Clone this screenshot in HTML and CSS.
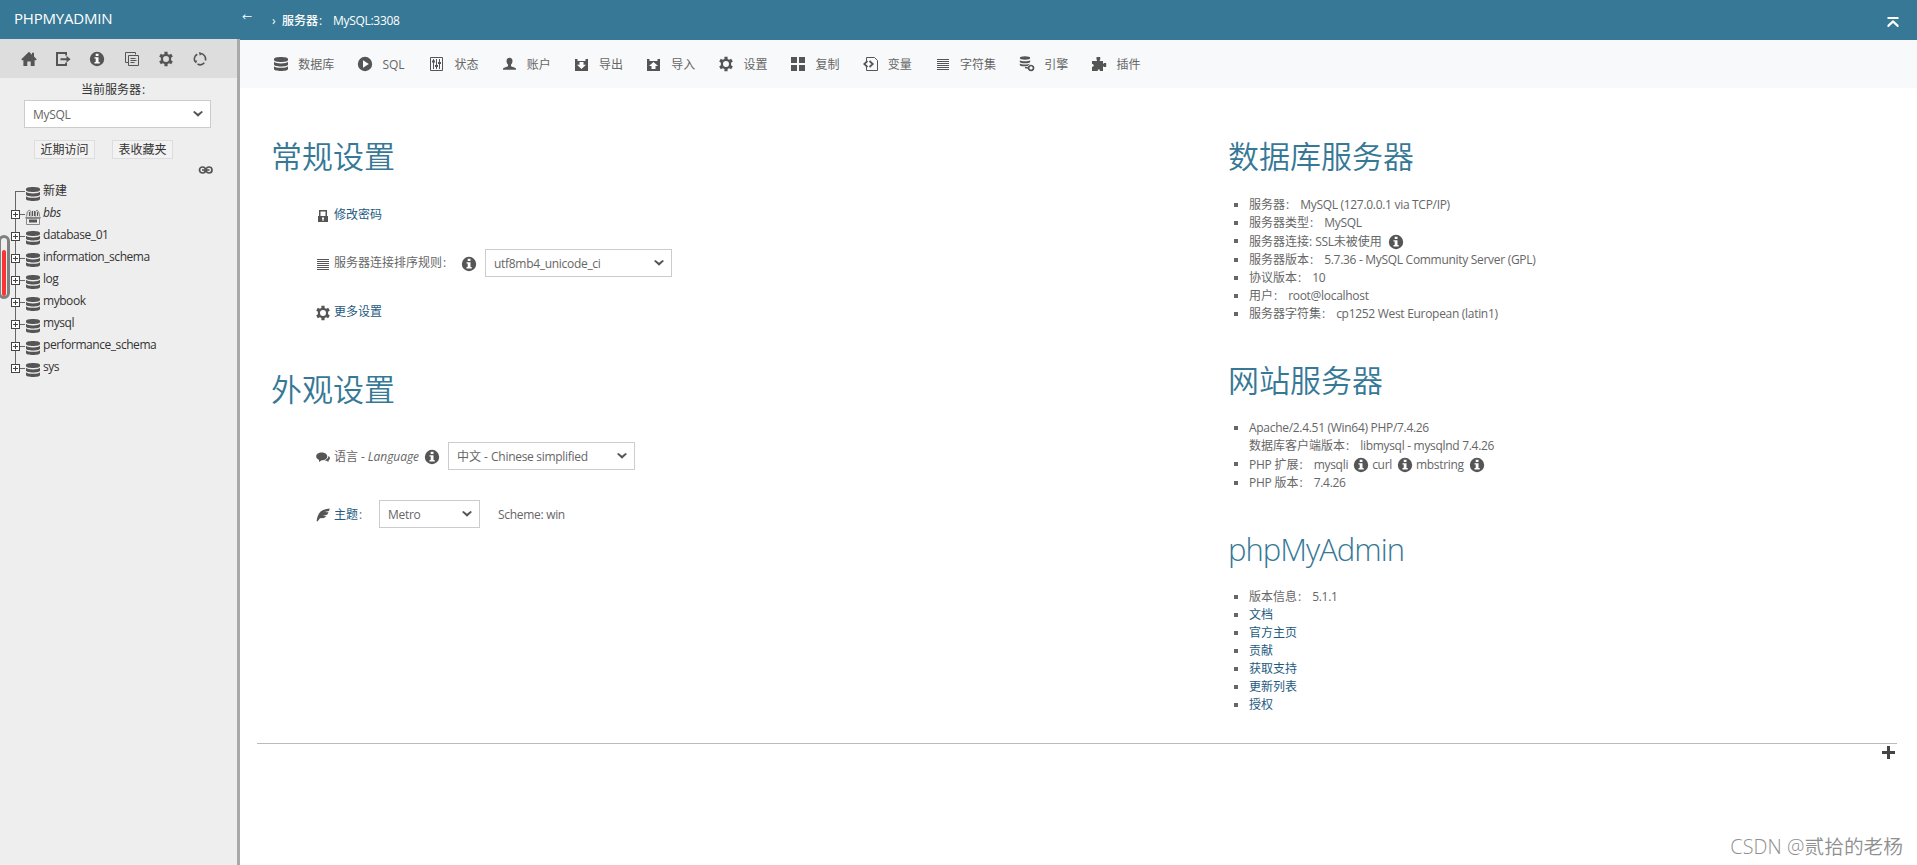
FILE: index.html
```
<!DOCTYPE html>
<html lang="zh-CN">
<head>
    <meta charset="UTF-8">
    <meta name="viewport" content="width=device-width, initial-scale=1.0">
    <title>MySQL:3308 | phpMyAdmin 5.1.1</title>
    <link rel="stylesheet" href="styles.css">
</head>
<body>
    <!-- Icon sprite -->
    <svg class="sprite" xmlns="http://www.w3.org/2000/svg">
        <symbol id="i-db" viewBox="0 0 16 16">
            <path d="M1 3c0-1.300 3-2 7-2s7 .7 7 2v1c0 1.300-3 2-7 2s-7-.7-7-2z"/>
            <path d="M1 5.800c1 1 3.500 1.600 7 1.600s6-.6 7-1.600v2.700c0 1.200-3 2-7 2s-7-.8-7-2z"/>
            <path d="M1 10.200c1 1 3.500 1.600 7 1.600s6-.6 7-1.600v2.700c0 1.200-3 2-7 2s-7-.8-7-2z"/>
        </symbol>
        <symbol id="i-home" viewBox="0 0 16 16">
            <path d="M8 .8 11 3.700V1.800h2v3.800l2.700 2.700-.7.900h-1.400V15H9.700v-4.500H6.300V15H2.400V9.200H1L.3 8.300z"/>
        </symbol>
        <symbol id="i-exit" viewBox="0 0 16 16">
            <path d="M1 1h11v3.500h-1.800V3H3v10h7.200v-1.500H12V15H1z"/>
            <path d="M5.500 7.200h6V4.800L15.600 8.200l-4.100 3.400V9.200h-6z"/>
        </symbol>
        <symbol id="i-info" viewBox="0 0 16 16">
            <circle cx="8" cy="8" r="7.200"/>
            <path class="cut" d="M6.700 2.800h2.800v2.200H6.700zM5.500 6.200h4v4.800h1.200v1.400H5.500V11h1.200V7.600H5.500z"/>
        </symbol>
        <symbol id="i-docs" viewBox="0 0 16 16">
            <path class="line" d="M4.500 11.500h-3v-10h10v2M4.500 4.500h10v10h-10zM6.500 7.500h5M6.500 9.500h6M6.500 11.500h4"/>
        </symbol>
        <symbol id="i-gear" viewBox="0 0 16 16">
            <path fill-rule="evenodd" d="M6.400.8h3.200v2.100l1.600.9 2-1 1.600 2.700-1.700 1.200v2.600l1.700 1.200-1.600 2.700-2-1-1.600.9v2.100H6.400v-2.100l-1.600-.9-2 1-1.600-2.700 1.700-1.200V6.700L1.200 5.500l1.600-2.700 2 1 1.600-.9zM8 5a3 3 0 1 0 0 6 3 3 0 0 0 0-6z"/>
        </symbol>
        <symbol id="i-reload" viewBox="0 0 16 16">
            <path class="line thick" d="M5.200 3.200A5.600 5.600 0 0 0 3 10.500M5.500 13a5.600 5.600 0 0 0 6.800-1.300M13.400 9.500A5.600 5.600 0 0 0 8.500 2.500"/>
            <path d="M1.800 9.800 5.300 9.500 4 12.600zM6.800 1l3.500 1.200-2.500 2.600z"/>
        </symbol>
        <symbol id="i-play" viewBox="0 0 16 16">
            <circle cx="8" cy="8" r="7.200"/>
            <path class="cut" d="M6 4.300 11.800 8 6 11.700z"/>
        </symbol>
        <symbol id="i-status" viewBox="0 0 16 16">
            <path class="line" d="M1.500 1.500h12v13h-12zM4.500 3v10M7.500 3v10M10.500 3v10"/>
            <path d="M3 4.500h3v2H3zM6 9h3v2H6zM9 6h3v2H9z"/>
        </symbol>
        <symbol id="i-user" viewBox="0 0 16 16">
            <path d="M7.500 1.800c2 0 3 1.300 3 3.200 0 1.600-.7 2.800-1.500 3.600v1.600l4.500 1.800c.5.300.5 1 .5 1.700H1c0-.7 0-1.400.5-1.700L6 10.200V8.600C5.200 7.800 4.500 6.600 4.500 5c0-1.900 1-3.200 3-3.200z"/>
        </symbol>
        <symbol id="i-export" viewBox="0 0 16 16">
            <path d="M1 3h2.500v2h8V3H14v12H1z"/>
            <path class="cut" d="M5.500 6h4v2.700H12L7.500 13 3 8.700h2.500z"/>
        </symbol>
        <symbol id="i-import" viewBox="0 0 16 16">
            <path d="M1 3h2.500v2h8V3H14v12H1z"/>
            <path class="cut" d="M5.500 13h4v-3H12L7.500 6 3 10h2.500z"/>
        </symbol>
        <symbol id="i-blocks" viewBox="0 0 16 16">
            <path d="M1 1h6v6H1zM9 1h6v6H9zM1 9h6v6H1zM9 9h6v6H9z"/>
        </symbol>
        <symbol id="i-vars" viewBox="0 0 16 16">
            <path class="line" d="M3.500 5V1.500h8l3 3v10h-11V11"/>
            <path class="line thick" d="M4.500 5 1.200 8l3.300 3M6.500 5l3.300 3-3.300 3"/>
        </symbol>
        <symbol id="i-lines" viewBox="0 0 16 16">
            <path d="M2 3h12v1H2zM2 5h12v1H2zM2 7h12v1H2zM2 9h12v1H2zM2 11h12v1H2zM2 13h12v1H2z"/>
        </symbol>
        <symbol id="i-engine" viewBox="0 0 16 16">
            <ellipse cx="6" cy="2" rx="5.200" ry="1.700"/>
            <path d="M.8 4.200c1.500 1.300 8.900 1.300 10.400 0v1.500c0 2-10.400 2-10.400 0zM.8 7.500c1.500 1.300 8.900 1.300 10.400 0l-2.500 2.400C5 10.700.8 10.300.8 9z"/>
            <path class="line thick" d="M12 9.500a2.500 2.500 0 1 0 .1 0zM6 11.500l3 .5"/>
        </symbol>
        <symbol id="i-plugin" viewBox="0 0 16 16">
            <path d="M5.500 1h3.700v2.500L8.500 5H12v3l1.200-1h2v4h-2l-1.200-.8V15H8.800v-1.500h-2V15H1v-4l2-1-1-2H1V5h5.200l-.7-1.500z"/>
        </symbol>
        <symbol id="i-lock" viewBox="0 0 16 16">
            <path fill-rule="evenodd" d="M4 2h8v6h1v6H3V8h1zm1.500 1.500V8h5V3.500zM7 9.500V11l.5.500V13h1v-1.500L9 11V9.500z"/>
        </symbol>
        <symbol id="i-chat" viewBox="0 0 16 16">
            <path d="M6.700 3.500c3.200 0 5.500 1.700 5.500 3.900s-2.300 3.800-5.500 3.800L4 13v-2.300C2.300 10 1.200 8.900 1.200 7.400c0-2.200 2.300-3.900 5.500-3.900z"/>
            <path d="M13.500 7c.9.500 1.400 1.300 1.400 2.300 0 1-.6 1.700-1.400 2.100V13l-2-1.200c-1 0-1.600-.2-2.200-.5 2.400-.7 4-2.200 4.200-4.300z"/>
        </symbol>
        <symbol id="i-feather" viewBox="0 0 16 16">
            <path d="M14.800 1.500 14 4l-4.500.9 4 .3-1.300 2.500-4.500.9 3.700.4-2.400 2-4 .2-2.500 3.400-.9-.5c.6-3.700 1.200-6.900 4-9.700C8 2.700 11.500 1.700 14.800 1.500z"/>
        </symbol>
        <symbol id="i-chevron" viewBox="0 0 12 8">
            <path d="M1 2 2.500.9 6 3.800 9.500.9 11 2 6 6.700z"/>
        </symbol>
        <symbol id="i-link" viewBox="0 0 16 10">
            <rect class="line thick" x="1.500" y="2" width="6" height="6" rx="3"/>
            <rect class="line thick" x="8" y="2" width="6" height="6" rx="3"/>
            <path d="M4 4.200h7.500v1.600H4z"/>
        </symbol>
        <symbol id="i-basket" viewBox="0 0 16 18">
            <path class="pale" d="M1 9V5l2-3h2.500l1 2 1-2h2l1 2 .8-2H13l2 3v4z"/>
            <path class="line soft" d="M1.500 8.500 2.300 4l2-2L6 3.500v5M10.500 8.500v-5L12 2l1.800 2 .9 4.500"/>
            <path class="line" d="M4.500 4v4M7.500 3v5M9.500 3v5M12.500 4v4"/>
            <path class="soft-fill" d="M0 9h16l-1 2H1z"/>
            <path class="line soft" d="M1.500 10.500h13v6h-13z"/>
            <path d="M4 11.500h8v3H4z"/>
        </symbol>
        <symbol id="i-totop" viewBox="0 0 12 12">
            <path d="M.5 1h11v2H.5zM6 4l5.500 5v2h-1.200L6 7l-4.300 4H.5V9z"/>
        </symbol>
    </svg>

    <aside class="sidebar">
        <div class="brand">PHPMYADMIN</div>
        <div class="nav-icons">
            <svg class="icon"><use href="#i-home"/></svg>
            <svg class="icon"><use href="#i-exit"/></svg>
            <svg class="icon"><use href="#i-info"/></svg>
            <svg class="icon"><use href="#i-docs"/></svg>
            <svg class="icon"><use href="#i-gear"/></svg>
            <svg class="icon"><use href="#i-reload"/></svg>
        </div>
        <div class="server-choice">
            <label>当前服务器<span class="colon">:</span></label>
            <div class="select"><span class="en">MySQL</span><svg class="chevron"><use href="#i-chevron"/></svg></div>
        </div>
        <div class="quick">
            <button type="button">近期访问</button>
            <button type="button">表收藏夹</button>
        </div>
        <div class="link-row"><svg><use href="#i-link"/></svg></div>

        <ul class="tree">
            <li class="first"><span class="branch"></span><svg class="icon"><use href="#i-db"/></svg><span>新建</span></li>
            <li><span class="branch"><i class="plus"></i></span><svg class="icon basket"><use href="#i-basket"/></svg><em class="en">bbs</em></li>
            <li><span class="branch"><i class="plus"></i></span><svg class="icon"><use href="#i-db"/></svg><span class="en">database_01</span></li>
            <li><span class="branch"><i class="plus"></i></span><svg class="icon"><use href="#i-db"/></svg><span class="en">information_schema</span></li>
            <li><span class="branch"><i class="plus"></i></span><svg class="icon"><use href="#i-db"/></svg><span class="en">log</span></li>
            <li><span class="branch"><i class="plus"></i></span><svg class="icon"><use href="#i-db"/></svg><span class="en">mybook</span></li>
            <li><span class="branch"><i class="plus"></i></span><svg class="icon"><use href="#i-db"/></svg><span class="en">mysql</span></li>
            <li><span class="branch"><i class="plus"></i></span><svg class="icon"><use href="#i-db"/></svg><span class="en">performance_schema</span></li>
            <li class="last"><span class="branch"><i class="plus"></i></span><svg class="icon"><use href="#i-db"/></svg><span class="en">sys</span></li>
        </ul>
        <div class="gauge"><div class="gauge-fill"></div></div>
    </aside>

    <main class="main">
        <header class="topbar">
            <span class="collapse">←</span>
            <span class="sep">›</span>
            <span class="crumb">服务器<span class="colon">:</span></span>
            <span class="crumb-name">MySQL:3308</span>
            <svg class="totop"><use href="#i-totop"/></svg>
        </header>

        <nav class="tabs">
            <a><svg class="icon"><use href="#i-db"/></svg><span>数据库</span></a>
            <a class="sql"><svg class="icon"><use href="#i-play"/></svg><span>SQL</span></a>
            <a><svg class="icon"><use href="#i-status"/></svg><span>状态</span></a>
            <a><svg class="icon"><use href="#i-user"/></svg><span>账户</span></a>
            <a><svg class="icon"><use href="#i-export"/></svg><span>导出</span></a>
            <a><svg class="icon"><use href="#i-import"/></svg><span>导入</span></a>
            <a><svg class="icon"><use href="#i-gear"/></svg><span>设置</span></a>
            <a><svg class="icon"><use href="#i-blocks"/></svg><span>复制</span></a>
            <a><svg class="icon"><use href="#i-vars"/></svg><span>变量</span></a>
            <a><svg class="icon"><use href="#i-lines"/></svg><span>字符集</span></a>
            <a><svg class="icon"><use href="#i-engine"/></svg><span>引擎</span></a>
            <a><svg class="icon"><use href="#i-plugin"/></svg><span>插件</span></a>
        </nav>

        <div class="content">
            <div class="col-left">
                <section>
                    <h2>常规设置</h2>
                    <div class="rows general">
                        <div class="row"><svg class="icon"><use href="#i-lock"/></svg><a class="link">修改密码</a></div>
                        <div class="row">
                            <svg class="icon"><use href="#i-lines"/></svg><span class="collation">服务器连接排序规则<span class="colon">:</span></span>
                            <svg class="icon info"><use href="#i-info"/></svg>
                            <div class="select"><span class="en">utf8mb4_unicode_ci</span><svg class="chevron"><use href="#i-chevron"/></svg></div>
                        </div>
                        <div class="row more"><svg class="icon"><use href="#i-gear"/></svg><a class="link">更多设置</a></div>
                    </div>
                </section>
                <section>
                    <h2>外观设置</h2>
                    <div class="rows appearance">
                        <div class="row">
                            <svg class="icon"><use href="#i-chat"/></svg><span class="language">语言 - <em>Language</em></span>
                            <svg class="icon info"><use href="#i-info"/></svg>
                            <div class="select"><span>中文 - <span class="en">Chinese simplified</span></span><svg class="chevron"><use href="#i-chevron"/></svg></div>
                        </div>
                        <div class="row">
                            <svg class="icon"><use href="#i-feather"/></svg><span class="theme"><a class="link">主题</a><span class="colon">:</span></span>
                            <div class="select small"><span class="en">Metro</span><svg class="chevron"><use href="#i-chevron"/></svg></div>
                            <span class="scheme en">Scheme: win</span>
                        </div>
                    </div>
                </section>
            </div>

            <div class="col-right">
                <section>
                    <h2>数据库服务器</h2>
                    <ul class="facts">
                        <li>服务器<span class="colon">:</span><span class="en val">MySQL (127.0.0.1 via TCP/IP)</span></li>
                        <li>服务器类型<span class="colon">:</span><span class="en val">MySQL</span></li>
                        <li class="tall">服务器连接: <span class="en">SSL</span>未被使用<svg class="icon gap"><use href="#i-info"/></svg></li>
                        <li>服务器版本<span class="colon">:</span><span class="en val">5.7.36 - MySQL Community Server (GPL)</span></li>
                        <li>协议版本<span class="colon">:</span><span class="en val">10</span></li>
                        <li>用户<span class="colon">:</span><span class="en val">root@localhost</span></li>
                        <li>服务器字符集<span class="colon">:</span><span class="en val">cp1252 West European (latin1)</span></li>
                    </ul>
                </section>
                <section>
                    <h2>网站服务器</h2>
                    <ul class="facts">
                        <li><span class="en">Apache/2.4.51 (Win64) PHP/7.4.26</span></li>
                        <li class="plain">数据库客户端版本<span class="colon">:</span><span class="en val">libmysql - mysqlnd 7.4.26</span></li>
                        <li class="tall"><span class="en">PHP</span> 扩展<span class="colon">:</span><span class="en val">mysqli</span><svg class="icon ext"><use href="#i-info"/></svg><span class="en">curl</span><svg class="icon ext"><use href="#i-info"/></svg><span class="en">mbstring</span><svg class="icon ext"><use href="#i-info"/></svg></li>
                        <li><span class="en">PHP</span> 版本<span class="colon">:</span><span class="en val">7.4.26</span></li>
                    </ul>
                </section>
                <section>
                    <h2 class="latin">phpMyAdmin</h2>
                    <ul class="facts">
                        <li>版本信息<span class="colon">:</span><span class="en val">5.1.1</span></li>
                        <li><a class="link">文档</a></li>
                        <li><a class="link">官方主页</a></li>
                        <li><a class="link">贡献</a></li>
                        <li><a class="link">获取支持</a></li>
                        <li><a class="link">更新列表</a></li>
                        <li><a class="link">授权</a></li>
                    </ul>
                </section>
            </div>
        </div>

        <footer class="footer"><span class="add"></span></footer>
    </main>

    <div class="watermark"><span>CSDN @</span>贰拾的老杨</div>
</body>
</html>
```

FILE: styles.css
```
* {
    box-sizing: border-box;
}

body {
    margin: 0;
    height: 865px;
    display: flex;
    overflow: hidden;
    font-family: "Open Sans", "Noto Sans CJK SC", sans-serif;
    font-size: 12px;
    line-height: 18px;
    color: #666;
    background: #fff;
}

ul {
    list-style: none;
    margin: 0;
    padding: 0;
}

.sprite {
    position: absolute;
    width: 0;
    height: 0;
}

.icon {
    width: 16px;
    height: 16px;
    flex: none;
    fill: #555;
}

.line {
    fill: none;
    stroke: #555;
    stroke-width: 1;
}

.thick {
    stroke-width: 1.7;
}

.soft {
    stroke: #888;
}

.soft-fill {
    fill: #888;
}

.cut {
    fill: #fff;
}

.pale {
    fill: #ddd;
}

.en {
    letter-spacing: -0.3px;
}

.link {
    color: #235a81;
}

.colon {
    margin-left: 1px;
}

/* Sidebar */
.sidebar {
    position: relative;
    width: 240px;
    flex: none;
    background: linear-gradient(to right, #eee 237px, #a9a9a9 237px);
    color: #333;
}

.brand {
    height: 39px;
    padding-left: 14px;
    line-height: 37px;
    font-size: 15px;
    letter-spacing: -0.2px;
    color: #fff;
    background: #367896;
}

.nav-icons {
    width: 237px;
    height: 39px;
    padding: 1px 0 0 21px;
    display: flex;
    align-items: center;
    gap: 18.2px;
    background: #ddd;
}

.server-choice {
    padding-left: 24px;
    height: 50px;
}

.server-choice label {
    display: block;
    width: 178px;
    height: 22px;
    line-height: 23px;
    text-align: center;
}

.select {
    display: flex;
    align-items: center;
    justify-content: space-between;
    width: 187px;
    height: 28px;
    padding: 0 6px 0 8px;
    border: 1px solid #ccc;
    background: #fff;
    color: #666;
}

.select > span {
    padding-top: 2px;
}

.select.small {
    width: 101px;
}

.chevron {
    width: 12px;
    height: 8px;
    fill: #555;
}

.quick {
    display: flex;
    gap: 17px;
    padding: 12px 0 0 34px;
}

.quick button {
    width: 61px;
    height: 19px;
    padding: 0;
    border: 1px solid #ddd;
    background: #f2f2f2;
    font: inherit;
    line-height: 17px;
    color: #333;
}

.link-row {
    height: 21px;
    padding: 6px 0 0 198px;
}

.link-row svg {
    display: block;
    width: 16px;
    height: 10px;
    fill: #555;
}

.tree li {
    display: flex;
    align-items: center;
    height: 22px;
}

.tree .icon {
    margin: 5px 2px 0 0;
}

.tree .basket {
    height: 18px;
    margin-top: 7px;
}

.tree .en {
    letter-spacing: -0.45px;
}

/* connector lines between the nodes */
.branch {
    display: flex;
    align-items: center;
    width: 25px;
    height: 22px;
    padding-left: 11px;
    background:
        linear-gradient(#666, #666) 15px 0 / 1px 22px no-repeat,
        linear-gradient(#666, #666) 15px 12px / 10px 1px no-repeat;
}

.first .branch {
    background:
        linear-gradient(#666, #666) 15px 11px / 1px 11px no-repeat,
        linear-gradient(#666, #666) 15px 11px / 10px 1px no-repeat;
}

.last .branch {
    background:
        linear-gradient(#666, #666) 15px 0 / 1px 11px no-repeat,
        linear-gradient(#666, #666) 15px 12px / 10px 1px no-repeat;
}

.plus {
    width: 9px;
    height: 9px;
    margin-top: 3px;
    border: 1px solid #444;
    background:
        linear-gradient(#444, #444) center / 5px 1px no-repeat,
        linear-gradient(#444, #444) center / 1px 5px no-repeat,
        #fff;
}

.gauge {
    position: absolute;
    left: -2px;
    top: 235px;
    width: 12px;
    height: 64px;
    padding: 12px 1px 0 1px;
    border: 3px solid #808080;
    border-radius: 6px;
    background: #eee;
}

.gauge-fill {
    width: 4px;
    height: 46px;
    border-radius: 2px;
    background: #f83434;
}

/* Main area */
.main {
    flex: 1;
}

.topbar {
    display: flex;
    align-items: center;
    height: 40px;
    margin-left: -3px;
    padding: 1px 0 0 5px;
    color: #fff;
    background: #367896;
}

.collapse {
    width: 30px;
    margin-top: -8px;
    font-size: 10px;
}

.sep {
    width: 10px;
}

.crumb {
    width: 51px;
    font-weight: 500;
}

.crumb-name {
    font-weight: 500;
    letter-spacing: -0.3px;
}

.totop {
    width: 12px;
    height: 12px;
    margin: 2px 18px 0 auto;
    fill: #fff;
}

.tabs {
    display: flex;
    align-items: center;
    gap: 24px;
    height: 48px;
    padding-left: 33px;
    background: #f8f9fa;
}

.tabs a {
    display: flex;
    align-items: center;
    gap: 9.2px;
    margin-right: -1px;
}

.tabs span {
    padding-top: 2px;
}

.tabs .sql {
    width: 49.2px;
}

.content {
    display: grid;
    grid-template-columns: 957px 1fr;
    padding: 48px 0 0 32px;
}

h2 {
    margin: 0 0 0 -1px;
    height: 40px;
    line-height: 40px;
    font-size: 31px;
    font-weight: 350;
    color: #367896;
}

.latin {
    line-height: 39px;
    font-weight: 300;
    letter-spacing: -1px;
}

.rows {
    display: flex;
    flex-direction: column;
    padding-left: 43px;
}

.row {
    display: flex;
    align-items: center;
    height: 28px;
}

.row > .icon:first-child {
    margin: 2px 3px 0 0;
}

.row.more {
    margin-top: 1px;
}

.general {
    margin: 25px 0 43px;
    gap: 20px;
}

.appearance {
    margin-top: 33px;
    gap: 30px;
}

.collation {
    width: 127px;
}

.language {
    width: 90px;
    padding-top: 1px;
    letter-spacing: -0.05px;
}

.theme {
    width: 45px;
    padding-top: 1px;
}

.info {
    margin: 2px 8px 0 0;
}

.scheme {
    margin-left: 18px;
    padding-top: 1px;
}

.facts {
    margin: 19px 0 38px;
}

.facts li {
    display: flex;
    align-items: center;
    height: 18px;
    padding-left: 20px;
    white-space: pre;
    background: linear-gradient(#666, #666) 5px 7px / 4px 4px no-repeat;
}

section:first-child .facts {
    margin: 20px 0 37px;
}

section:last-child .facts {
    margin: 18px 0 39px;
}

.facts .plain {
    background: none;
}

.facts .tall {
    height: 19px;
}

.val {
    margin-left: 11px;
}

.gap {
    margin: 0 0 0 6px;
}

.ext {
    margin: 0 3px 0 5px;
}

.footer {
    display: flex;
    justify-content: flex-end;
    margin: -10px 20px 0 17px;
    padding: 2px 2px 0 0;
    border-top: 1px solid #bbb;
}

.add {
    width: 13px;
    height: 13px;
    background:
        linear-gradient(#444, #444) center / 13px 3px no-repeat,
        linear-gradient(#444, #444) center / 3px 13px no-repeat;
}

.watermark {
    position: absolute;
    right: 14px;
    bottom: 4px;
    font-size: 19.7px;
    font-weight: 350;
    line-height: 28px;
    color: #8f8f8f;
}

.watermark span {
    letter-spacing: 0.1px;
}
```
